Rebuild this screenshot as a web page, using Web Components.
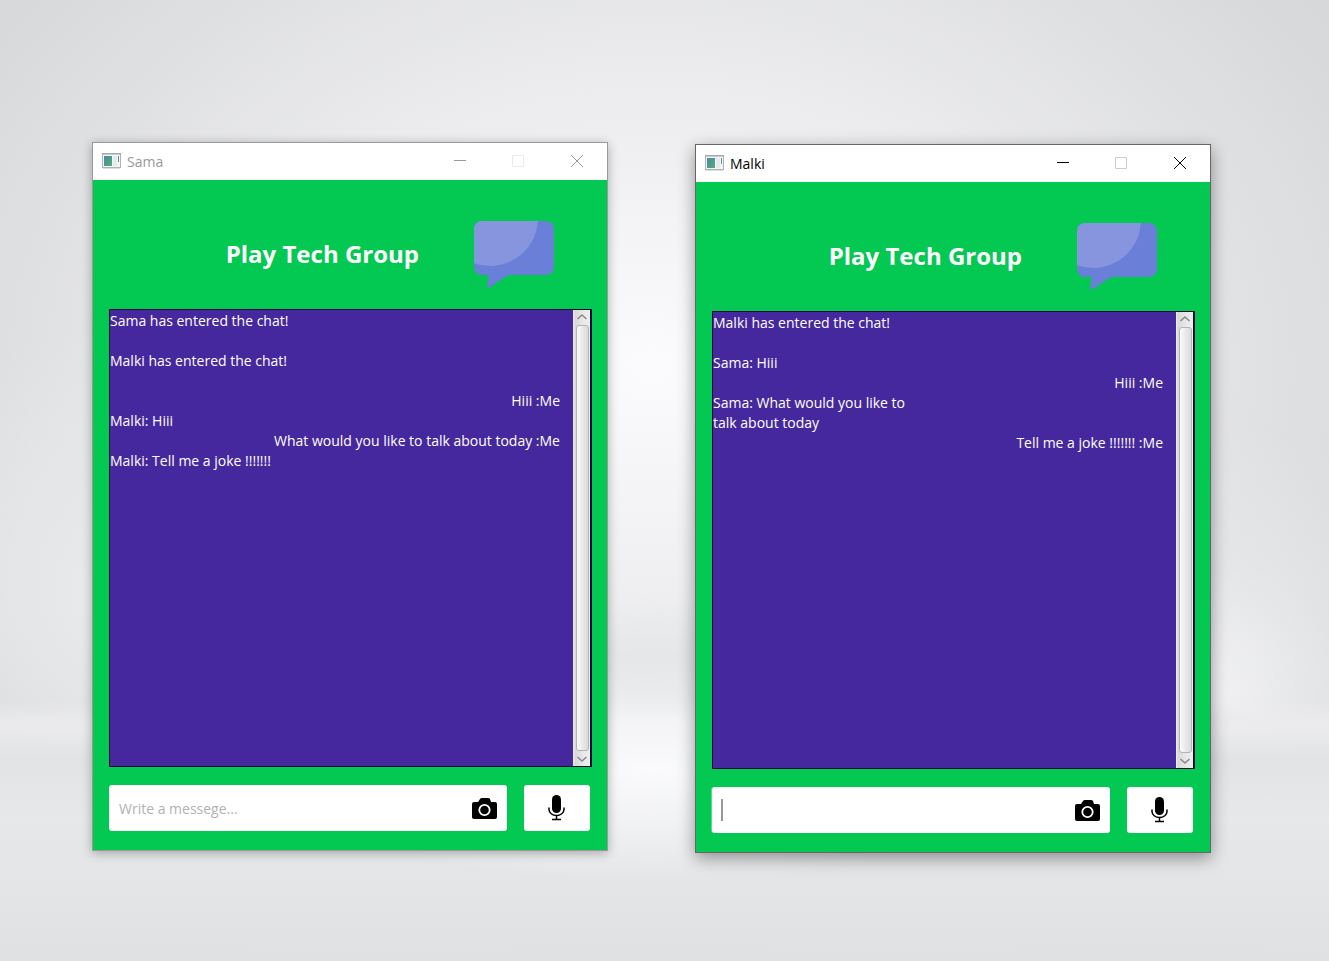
<!DOCTYPE html>
<html lang="en">
<head>
<meta charset="utf-8">
<title>Play Tech Group</title>
<style>
html, body { margin: 0; height: 100%; }
body { font-family: "Open Sans", "Noto Sans", sans-serif; }
</style>
</head>
<body>
<chat-desktop>
  <chat-window class="first" name="Sama" placeholder="Write a messege..." inactive>
    <chat-line>Sama has entered the chat!</chat-line>
    <chat-line></chat-line>
    <chat-line>Malki has entered the chat!</chat-line>
    <chat-line></chat-line>
    <chat-line own>Hiii :Me</chat-line>
    <chat-line>Malki: Hiii</chat-line>
    <chat-line own>What would you like to talk about today :Me</chat-line>
    <chat-line>Malki: Tell me a joke !!!!!!!</chat-line>
  </chat-window>
  <chat-window class="second" name="Malki">
    <chat-line>Malki has entered the chat!</chat-line>
    <chat-line></chat-line>
    <chat-line>Sama: Hiii</chat-line>
    <chat-line own>Hiii :Me</chat-line>
    <chat-line>Sama: What would you like to talk about today</chat-line>
    <chat-line own>Tell me a joke !!!!!!! :Me</chat-line>
  </chat-window>
</chat-desktop>
<script>
class ShadowElement extends HTMLElement {
  connectedCallback() {
    if (!this.shadowRoot) this.attachShadow({ mode: 'open' }).innerHTML = this.render();
  }
}

customElements.define('chat-desktop', class extends ShadowElement {
  render() {
    return `<style>
      :host { display: block; position: relative; min-height: 100%; overflow: hidden;
        background:
          radial-gradient(ellipse 28% 12% at 49% 80%, rgba(252,252,254,.95), rgba(252,252,254,0)),
          linear-gradient(to bottom, transparent 73%, rgba(235,235,237,.9) 75%, rgba(235,235,237,.9) 76%, #e1e3e5 79%, #e7e8ea 85%, #dfe1e3 100%),
          radial-gradient(ellipse 22% 28% at 90% 72%, #f3f3f5, rgba(232,233,235,.6) 50%, rgba(232,233,235,0)),
          radial-gradient(ellipse 22% 28% at 10% 62%, #eaebed, rgba(232,233,235,.6) 50%, rgba(232,233,235,0)),
          radial-gradient(ellipse 14% 12% at 49% 74%, #dfe2e4, rgba(223,226,228,0)),
          radial-gradient(ellipse 72% 74% at 49% 38%, #fbfbfd 0%, #ebebed 42%, #d9dadb 80%, #d4d5d6 100%); }
      ::slotted(chat-window) { position: absolute; }
      ::slotted(.first) { left: 92px; top: 142px; }
      ::slotted(.second) { left: 695px; top: 144px; }
    </style><slot></slot>`;
  }
});

customElements.define('chat-line', class extends ShadowElement {
  render() {
    return `<style>
      :host { display: block; min-height: 20px; max-width: 208px; white-space: normal; }
      :host([own]) { align-self: flex-end; max-width: none; }
    </style><slot></slot>`;
  }
});

customElements.define('title-bar', class extends ShadowElement {
  render() {
    return `<style>
      :host { display: flex; align-items: center; height: 37px; background: #fff; color: #000; --box: #ccc; font-size: 14px; }
      :host([inactive]) { color: #999; --box: #eaeaea; }
      .app { margin: 0 6px 0 9px; }
      span { flex: 1; }
      button { width: 58px; height: 36px; padding: 0; border: 0; background: none; color: inherit; display: grid; place-items: center; align-self: flex-start; }
      button:last-child { width: 60px; }
      button svg { display: block; }
    </style>
    <svg class="app" width="19" height="17" viewBox="0 0 19 17">
      <rect x=".5" y=".5" width="18" height="14" fill="#f4f5f6" stroke="#aeb3b9"/>
      <path d="M0 1h19" stroke="#9ba0aa"/><path d="M1 15.500h17" stroke="#ddd"/>
      <defs><linearGradient id="g" x2="1" y2="1"><stop stop-color="#4d87a8"/><stop offset="1" stop-color="#55ad72"/></linearGradient></defs>
      <rect x="2" y="3" width="8" height="10" fill="url(#g)"/>
      <rect x="11" y="3" width="4" height="10" fill="#e9eaeb"/><path d="M16.500 3v6" stroke="#5598a0"/>
    </svg>
    <span><slot></slot></span>
    <button aria-label="Minimize"><svg width="12" height="12"><path d="M0 5.500h12" stroke="currentColor"/></svg></button>
    <button aria-label="Maximize" disabled><svg width="12" height="12"><path d="M.5.5h11v11H.5z" fill="none" style="stroke:var(--box)"/></svg></button>
    <button aria-label="Close"><svg width="12" height="12"><path d="M0 0l12 12M12 0L0 12" stroke="currentColor"/></svg></button>`;
  }
});

customElements.define('scroll-strip', class extends ShadowElement {
  render() {
    return `<style>
      :host { display: flex; flex-direction: column; box-sizing: border-box; width: 17px; padding: 0 1px 0 3px;
        background: linear-gradient(to right, #f2f2f3 0, #d8d8d8 2px, #e9e9e9 60%, #eee); }
      svg { flex: none; width: 13px; height: 15px; }
      i { flex: 1; box-sizing: border-box; width: 13px; border: 1px solid #b4b4b4; border-radius: 3px; background: linear-gradient(to right, #fafafa, #dadada); }
    </style>
    <svg viewBox="0 0 13 15"><path d="M1.500 9L6 5 10.500 9" fill="none" stroke="#888" stroke-width="1.500"/></svg>
    <i></i>
    <svg viewBox="0 0 13 15"><path d="M1.500 6L6 10 10.500 6" fill="none" stroke="#888" stroke-width="1.500"/></svg>`;
  }
});

customElements.define('message-bar', class extends ShadowElement {
  render() {
    const hint = this.getAttribute('placeholder') || '';
    return `<style>
      :host { display: flex; gap: 17px; height: 46px; margin-right: 2px; }
      .field { flex: 1; display: flex; align-items: center; min-width: 0; padding: 0 10px; border-radius: 3px; background: #fff; }
      .focused { box-shadow: -1px 0 0 #5bdb8b; padding-left: 9px; }
      .caret { width: 2px; height: 22px; background: #999; }
      input { flex: 1; min-width: 0; height: 40px; padding: 0; border: 0; outline: 0; background: none; font: 14px/20px "Open Sans", "Noto Sans", sans-serif; color: #333; }
      input::placeholder { color: #b2b2b2; opacity: 1; }
      button { padding: 0; border: 0; background: none; display: grid; place-items: center; }
      .mic { width: 66px; border-radius: 3px; background: #fff; }
    </style>
    <div class="field ${hint ? '' : 'focused'}">
      ${hint ? '' : '<div class="caret"></div>'}
      <input type="text" aria-label="Message" placeholder="${hint}">
      <button aria-label="Send a picture"><svg width="25" height="21" viewBox="0 0 25 21">
        <path d="M2 4h4l2-3q.5-1 2-1h6q1.500 0 2 1l1 3h4q2 0 2 2v13q0 2-2 2H2q-2 0-2-2V6q0-2 2-2z"/>
        <circle cx="12.500" cy="12" r="5.200" fill="#000" stroke="#fff" stroke-width="1.800"/></svg></button>
    </div>
    <button class="mic" aria-label="Record a voice message"><svg width="18" height="26" viewBox="0 0 18 26">
      <rect x="4" y="0" width="9" height="18" rx="4.500"/>
      <path d="M1 12.500v2a7.500 6 0 0 0 15 0v-2M8.500 20.500v4M4 24.500h9" fill="none" stroke="#000" stroke-width="1.500"/></svg></button>`;
  }
});

customElements.define('chat-window', class extends ShadowElement {
  render() {
    const off = this.hasAttribute('inactive');
    return `<style>
      :host { display: block; box-sizing: border-box; width: 516px; border: 1px solid #666; background: #03c952; box-shadow: 0 5px 16px rgba(0,0,0,.4); }
      :host([inactive]) { border-color: #999; box-shadow: 0 2px 10px rgba(0,0,0,.3); }
      header { display: flex; justify-content: flex-end; align-items: flex-start; gap: 55px; padding: 41px 53px 21px 0; color: #fff; }
      h1 { margin: 0; font-size: 24px; line-height: 66px; font-weight: 700; white-space: nowrap; }
      header svg { display: block; }
      main { padding: 0 15px 19px 16px; }
      .chat { display: flex; height: 456px; margin-bottom: 18px; border: 1px solid #100838; border-right-width: 2px; background: #45289d; color: #fff; }
      .log { flex: 1; display: flex; flex-direction: column; padding: 1px 13px 0 0; font-size: 14px; line-height: 20px; }
    </style>
    <title-bar ${off ? 'inactive' : ''}>${this.getAttribute('name')}</title-bar>
    <header><h1>Play Tech Group</h1>
      <svg width="80" height="67" viewBox="0 0 80 67" aria-hidden="true">
        <defs><clipPath id="b"><rect width="80" height="54" rx="8"/></clipPath></defs>
        <rect width="80" height="54" rx="8" fill="#6a7fd8"/>
        <path d="M15 53L13 65q0 2 2 1.500L36 53z" fill="#6a7fd8"/>
        <circle cx="16" cy="-3" r="48" fill="#8795df" clip-path="url(#b)"/>
      </svg>
    </header>
    <main>
      <div class="chat"><div class="log" role="log"><slot></slot></div><scroll-strip></scroll-strip></div>
      <message-bar placeholder="${this.getAttribute('placeholder') || ''}"></message-bar>
    </main>`;
  }
});
</script>
</body>
</html>
